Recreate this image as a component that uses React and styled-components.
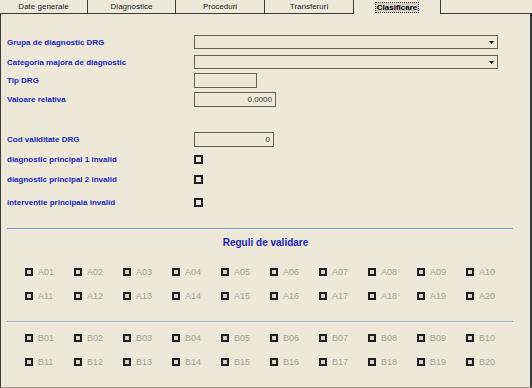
import styled, { createGlobalStyle } from "styled-components";

const GlobalStyle = createGlobalStyle`
  html, body {
    margin: 0;
    padding: 0;
    background: #ece9d8;
  }
  body {
    font-family: "Liberation Sans", Arial, sans-serif;
  }
`;

const Window = styled.div`
  width: 532px;
  height: 388px;
  display: flex;
  flex-direction: column;
  background: #ece9d8;
  overflow: hidden;
`;

const TabBar = styled.div`
  display: flex;
  height: 14px;
  flex-shrink: 0;
`;

const Tab = styled.div`
  width: ${(p) => p.$w}px;
  box-sizing: border-box;
  display: flex;
  align-items: center;
  justify-content: center;
  font-size: 8px;
  color: #1a1a1a;
  border-right: 1px solid #3a3a3a;
  border-bottom: ${(p) => (p.$active ? "none" : "1px solid #3a3a3a")};
  font-weight: ${(p) => (p.$active ? 700 : 400)};
  padding-top: ${(p) => (p.$active ? "1px" : "0")};
`;

const FocusLabel = styled.span`
  background: #d3cfc2;
  outline: 1px dotted #333;
  padding: 0 1px;
  line-height: 9px;
  color: #000;
`;

const TabFill = styled.div`
  flex: 1;
  border-bottom: 1px solid #3a3a3a;
`;

const Panel = styled.div`
  flex: 1;
  box-sizing: border-box;
  border-left: 1px solid #3a3a3a;
  border-right: 2px solid #3a3a3a;
  border-bottom: 1px solid #9d9a8c;
  padding-top: 21px;
  display: flex;
  flex-direction: column;
`;

const FormRow = styled.div`
  display: grid;
  grid-template-columns: 187px auto;
  align-items: center;
  height: ${(p) => p.$h}px;
  margin-top: ${(p) => p.$mt || 0}px;
  padding-left: 6px;
`;

const Label = styled.span`
  font-size: 8px;
  font-weight: 700;
  color: #1c1cbe;
  white-space: nowrap;
`;

const Field = styled.div`
  width: ${(p) => p.$w}px;
  height: 15px;
  box-sizing: border-box;
  border: 1px solid #656153;
  display: flex;
  align-items: center;
  justify-content: flex-end;
  padding-right: 3px;
  font-size: 8px;
  color: #333;
`;

const Combo = styled.div`
  width: 304px;
  height: 14px;
  box-sizing: border-box;
  border: 1px solid #656153;
  display: flex;
  align-items: center;
  justify-content: flex-end;
  padding-right: 3px;
`;

const FormCheck = styled.div`
  width: 9px;
  height: 9px;
  box-sizing: border-box;
  border: 2px solid #1e1e1e;
  background: #ece9d8;
`;

const Separator = styled.div`
  height: 1px;
  margin: ${(p) => p.$mt}px 17px 0 6px;
  background: ${(p) => p.$color};
  box-shadow: 0 1px 0 #f7f5ee;
`;

const Title = styled.div`
  margin-top: 8px;
  height: 12px;
  line-height: 12px;
  text-align: center;
  font-size: 10px;
  font-weight: 700;
  color: #1c1cbe;
`;

const RuleGrid = styled.div`
  display: grid;
  grid-template-columns: repeat(10, 49px);
  grid-auto-rows: 12px;
  row-gap: 12px;
  margin-top: ${(p) => p.$mt}px;
  padding-left: 24px;
`;

const RuleItem = styled.div`
  display: flex;
  align-items: center;
  gap: 5px;
`;

const RuleBox = styled.div`
  width: 8px;
  height: 8px;
  box-sizing: border-box;
  border: 2px solid #1e1e1e;
  background: #d9d5c8;
`;

const RuleText = styled.span`
  font-size: 9px;
  color: #a4a195;
`;

const tabs = [
  { name: "Date generale", w: 88 },
  { name: "Diagnostice", w: 88 },
  { name: "Proceduri", w: 89 },
  { name: "Transferuri", w: 89 },
  { name: "Clasificare", w: 87, active: true },
];

const Arrow = () => (
  <svg width="5" height="3" viewBox="0 0 5 3">
    <polygon points="0,0 5,0 2.5,3" fill="#111" />
  </svg>
);

const codes = (prefix, from) =>
  Array.from({ length: 10 }, (_, i) => prefix + String(from + i).padStart(2, "0"));

function Rules({ prefix, mt }) {
  const all = [...codes(prefix, 1), ...codes(prefix, 11)];
  return (
    <RuleGrid $mt={mt}>
      {all.map((c) => (
        <RuleItem key={c}>
          <RuleBox />
          <RuleText>{c}</RuleText>
        </RuleItem>
      ))}
    </RuleGrid>
  );
}

export default function App() {
  return (
    <Window>
      <GlobalStyle />
      <TabBar>
        {tabs.map((t) => (
          <Tab key={t.name} $w={t.w} $active={t.active}>
            {t.active ? <FocusLabel>{t.name}</FocusLabel> : t.name}
          </Tab>
        ))}
        <TabFill />
      </TabBar>
      <Panel>
        <FormRow $h={14}>
          <Label>Grupa de diagnostic DRG</Label>
          <Combo>
            <Arrow />
          </Combo>
        </FormRow>
        <FormRow $h={14} $mt={6}>
          <Label>Categoria majora de diagnostic</Label>
          <Combo>
            <Arrow />
          </Combo>
        </FormRow>
        <FormRow $h={15} $mt={4}>
          <Label>Tip DRG</Label>
          <Field $w={63} />
        </FormRow>
        <FormRow $h={15} $mt={4}>
          <Label>Valoare relativa</Label>
          <Field $w={82}>0.0000</Field>
        </FormRow>
        <FormRow $h={15} $mt={25}>
          <Label>Cod validitate DRG</Label>
          <Field $w={80}>0</Field>
        </FormRow>
        <FormRow $h={14} $mt={5}>
          <Label>diagnostic principal 1 invalid</Label>
          <FormCheck />
        </FormRow>
        <FormRow $h={14} $mt={6}>
          <Label>diagnostic principal 2 invalid</Label>
          <FormCheck />
        </FormRow>
        <FormRow $h={14} $mt={9}>
          <Label>interventie principala invalid</Label>
          <FormCheck />
        </FormRow>
        <Separator $mt={19} $color="#7d90d4" />
        <Title>Reguli de validare</Title>
        <Rules prefix="A" mt={17} />
        <Separator $mt={19} $color="#9ea6c2" />
        <Rules prefix="B" mt={10} />
      </Panel>
    </Window>
  );
}
